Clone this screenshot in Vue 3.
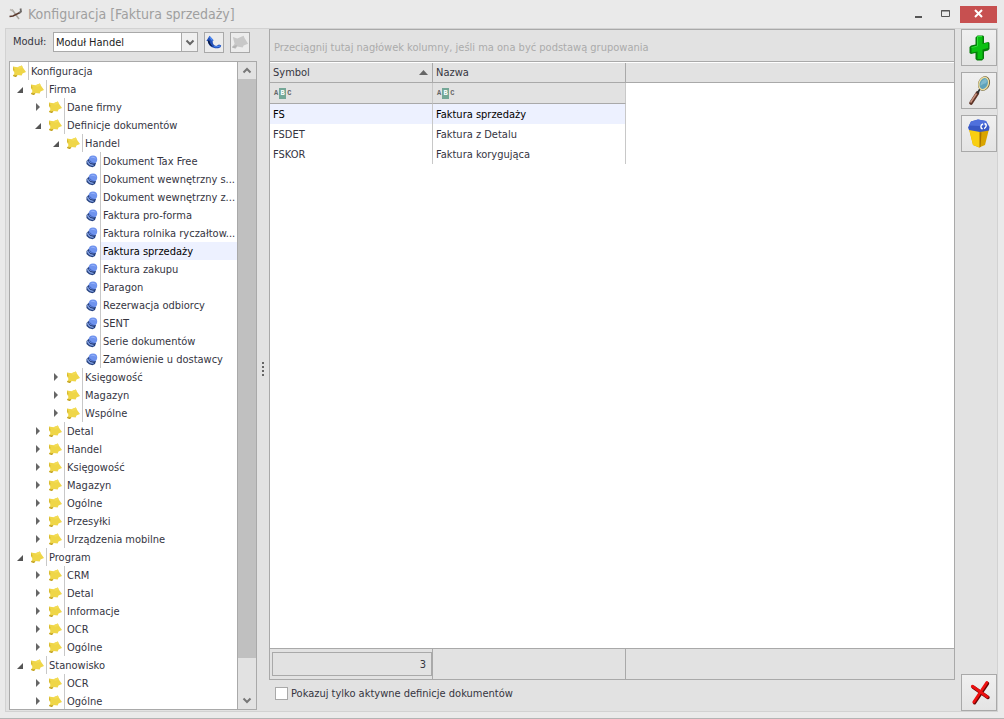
<script setup>
import { ref } from 'vue'

const moduleName = ref('Moduł Handel')
const activeOnly = ref(false)
const selected = ref('Faktura sprzedaży')

// level, label, state: open | closed | leaf | root
const nodes = [
  [0, 'Konfiguracja', 'root'],
  [1, 'Firma', 'open'],
  [2, 'Dane firmy', 'closed'],
  [2, 'Definicje dokumentów', 'open'],
  [3, 'Handel', 'open'],
  [4, 'Dokument Tax Free', 'leaf'],
  [4, 'Dokument wewnętrzny s...', 'leaf'],
  [4, 'Dokument wewnętrzny z...', 'leaf'],
  [4, 'Faktura pro-forma', 'leaf'],
  [4, 'Faktura rolnika ryczałtow...', 'leaf'],
  [4, 'Faktura sprzedaży', 'leaf'],
  [4, 'Faktura zakupu', 'leaf'],
  [4, 'Paragon', 'leaf'],
  [4, 'Rezerwacja odbiorcy', 'leaf'],
  [4, 'SENT', 'leaf'],
  [4, 'Serie dokumentów', 'leaf'],
  [4, 'Zamówienie u dostawcy', 'leaf'],
  [3, 'Księgowość', 'closed'],
  [3, 'Magazyn', 'closed'],
  [3, 'Wspólne', 'closed'],
  [2, 'Detal', 'closed'],
  [2, 'Handel', 'closed'],
  [2, 'Księgowość', 'closed'],
  [2, 'Magazyn', 'closed'],
  [2, 'Ogólne', 'closed'],
  [2, 'Przesyłki', 'closed'],
  [2, 'Urządzenia mobilne', 'closed'],
  [1, 'Program', 'open'],
  [2, 'CRM', 'closed'],
  [2, 'Detal', 'closed'],
  [2, 'Informacje', 'closed'],
  [2, 'OCR', 'closed'],
  [2, 'Ogólne', 'closed'],
  [1, 'Stanowisko', 'open'],
  [2, 'OCR', 'closed'],
  [2, 'Ogólne', 'closed']
].map(([level, label, state]) => ({ level, label, state }))

const rows = [
  { symbol: 'FS', name: 'Faktura sprzedaży' },
  { symbol: 'FSDET', name: 'Faktura z Detalu' },
  { symbol: 'FSKOR', name: 'Faktura korygująca' }
]
const current = ref('FS')
</script>

<template>
  <div class="window">
    <header class="titlebar">
      <svg class="app-icon" viewBox="0 0 14 14" aria-hidden="true">
        <path d="M3 2.500 L10 12" stroke="#aaa69f" stroke-width="1.500" />
        <path d="M0.500 9.500 L4 9 L11 5.500" stroke="#5b3a2e" stroke-width="1.600" fill="none" />
        <path d="M11.500 1.500 L12 4.500 L10 6" stroke="#6d6a68" stroke-width="1.800" fill="none" />
        <path d="M1 2.500 L4 4" stroke="#b9b5ae" stroke-width="1.600" />
      </svg>
      <h1>Konfiguracja [Faktura sprzedaży]</h1>
      <div class="caption">
        <button class="cap" type="button" aria-label="Minimalizuj">
          <svg viewBox="1 0 12 10"><path d="M2 7h7v2h-7z" fill="#555" /></svg>
        </button>
        <button class="cap" type="button" aria-label="Maksymalizuj">
          <svg viewBox="1 0 12 10"><path d="M1.500 1.500h8v6h-8z M1 2h9" fill="none" stroke="#555" /></svg>
        </button>
        <button class="cap close" type="button" aria-label="Zamknij">
          <svg viewBox="0 0 12 10"><path d="M2 1l7 7M9 1l-7 7" fill="none" stroke="#fff" stroke-width="2" /></svg>
        </button>
      </div>
    </header>

    <main class="panel">
      <section class="left">
        <div class="module">
          <label for="module">Moduł:</label>
          <div class="combo">
            <select id="module" v-model="moduleName"><option>Moduł Handel</option></select>
            <span class="drop"><svg viewBox="0 0 10 7"><path d="M1.500 1.500L5 5l3.500-3.500" fill="none" stroke="#666" stroke-width="2" /></svg></span>
          </div>
          <button class="small" type="button" aria-label="W górę">
            <svg viewBox="0 0 20 20">
              <path d="M5 3L1.500 9l1.500-.2C3.500 13 6 15.500 9.500 16.300c3 1 6.500.6 8-.8l.5-2-2.500-.6-2.500 1.400c-3 .2-4.500-1.600-4.500-5L9.500 8z" fill="#2350b8" />
              <path d="M5 3l4.500 5-2 .6-2.500-3zM10 14.500c2.500 1 4.500-1.200 7.500-.6l-.3 1c-2.500 1-5 1-7 .6z" fill="#4e8af2" />
              <path d="M3 8l2 .5c.4 3 1.800 5 4 6.500-3.500-.4-5.600-3-6-7z" fill="#0a1840" />
            </svg>
          </button>
          <button class="small" type="button" aria-label="Folder" disabled>
            <svg viewBox="0 0 20 20">
              <path d="M2 4.500l5 1.500 7-3 1 2.500 4 6.500-5 2-1 2-6-1L5 17.500l-4-1.500 3-4z" fill="#c8c8c8" />
              <path d="M1.500 15l4-1.500 1.500.5-2.500 3-3-1z" fill="#b4b4b4" />
            </svg>
          </button>
        </div>

        <div class="tree">
          <ul role="tree" aria-label="Konfiguracja">
            <li
              v-for="(n, i) in nodes"
              :key="i"
              role="treeitem"
              :aria-level="n.level + 1"
              :aria-selected="n.state === 'leaf' && n.label === selected"
              :class="['node', 'level-' + n.level]"
            >
              <button v-if="n.state === 'open'" class="toggle" type="button" aria-label="Zwiń">
                <svg viewBox="1 -1 8 8"><path d="M7 1v6H1z" fill="#555" /></svg>
              </button>
              <button v-else-if="n.state === 'closed'" class="toggle" type="button" aria-label="Rozwiń">
                <svg viewBox="1 -1 8 8"><path d="M2 -1l4 4-4 4z" fill="#666" /></svg>
              </button>
              <span v-else-if="n.state === 'leaf'" class="toggle"></span>
              <svg v-if="n.state !== 'leaf'" class="icon" viewBox="0 0 14 14" aria-hidden="true">
                <path d="M1 2.500l4.500.8L9.800 1.500l1 2L14 8l-3.500 1.500-.8 2-4.200-.6L4 13l-3-1 1.500-3L1 6z" fill="#efd648" />
                <path d="M1.200 11.200l2.800.3 1.500-.6L4 13l-3-1z" fill="#b8961d" />
                <path d="M1 2.500l1.500 3-.3 1.500L1 6z" fill="#d6b834" />
                <path d="M5.500 3.300l4.300-1.800 1 2-4 1.500z" fill="#f3dc55" />
              </svg>
              <svg v-else class="icon" viewBox="0 0 14 14" aria-hidden="true">
                <path d="M2.500 7L5 4.500l7 4.500-1 3-2.500 1.200L5 12.300 2.500 10z" fill="#24407e" />
                <path d="M3 6.800c0 2.700 2.700 5.200 6.300 5.100l.7-1.500C7.500 10.700 5 9 4.600 6.300z" fill="#7f9de0" />
                <path d="M4.600 6c.6 2.400 2.900 4 5.800 3.800" fill="none" stroke="#1c2f62" stroke-width="1.200" />
                <ellipse cx="9" cy="5.500" rx="4.200" ry="3.900" fill="#6f93ee" />
                <path d="M4.900 4.800c0 3 2.600 4.900 5.800 4.300C8 8.500 6 7 4.900 4.800z" fill="#4265bf" />
                <path d="M6.500 3.500c1.500-1.500 4.500-1 5.500 1.200-1.500-.6-3.500-.6-5.500-1.200z" fill="#94b1fb" />
              </svg>
              <span
                class="label"
                :class="{ current: n.state === 'leaf' && n.label === selected }"
                @click="n.state === 'leaf' && (selected = n.label)"
              >{{ n.label }}</span>
            </li>
          </ul>
          <div class="scroll">
            <button type="button" aria-label="Przewiń w górę">
              <svg viewBox="0 0 10 7"><path d="M1.500 5.500L5 2l3.500 3.500" fill="none" stroke="#777" stroke-width="2" /></svg>
            </button>
            <div class="track"><div class="thumb"></div></div>
            <button type="button" aria-label="Przewiń w dół">
              <svg viewBox="0 0 10 7"><path d="M1.500 1.500L5 5l3.500-3.500" fill="none" stroke="#777" stroke-width="2" /></svg>
            </button>
          </div>
        </div>
      </section>

      <div class="splitter" role="separator"><i></i><i></i><i></i><i></i></div>

      <section class="center">
        <div class="grid">
          <div class="group">Przeciągnij tutaj nagłówek kolumny, jeśli ma ona być podstawą grupowania</div>
          <div class="body">
            <table>
              <colgroup><col class="c1" /><col class="c2" /><col /></colgroup>
              <thead>
                <tr class="head">
                  <th scope="col" aria-sort="ascending">
                    <span class="th">Symbol<svg viewBox="0 0 9 5"><path d="M4.500 0L9 5H0z" fill="#666" /></svg></span>
                  </th>
                  <th scope="col">Nazwa</th>
                  <td></td>
                </tr>
                <tr class="filter">
                  <td><span class="abc"><span>A</span><b>B</b><span>C</span></span></td>
                  <td><span class="abc"><span>A</span><b>B</b><span>C</span></span></td>
                  <td></td>
                </tr>
              </thead>
              <tbody>
                <tr v-for="r in rows" :key="r.symbol" :class="{ current: r.symbol === current }" @click="current = r.symbol">
                  <td>{{ r.symbol }}</td>
                  <td>{{ r.name }}</td>
                  <td></td>
                </tr>
              </tbody>
            </table>
          </div>
          <div class="summary">
            <div><output>{{ rows.length }}</output></div>
            <div></div>
            <div></div>
          </div>
        </div>
        <label class="check"><input v-model="activeOnly" type="checkbox" />Pokazuj tylko aktywne definicje dokumentów</label>
      </section>

      <aside class="tools">
        <button class="tool" type="button" aria-label="Dodaj">
          <svg viewBox="0 0 32 32">
            <path d="M12.500 5.500l2-2 5.500 0 1 1v6.500l4.500-1 1 1v6l-1.500 1.500-4 1v7L19 28.500h-5l-1.500-1.500v-6l-4.500 1-1.500-1v-6l1.500-1.500 4.500-1z" fill="#067d0b" />
            <path d="M14.500 4.500h5v7.500l5.500-1.500v5.500l-5.500 1.500V27h-5v-7.500L8.500 20.800v-5.300l6-1.500z" fill="#0bc112" />
            <path d="M19 4.500h-4.500v9.500l-6 1.500" stroke="#2fe037" fill="none" />
          </svg>
        </button>
        <button class="tool" type="button" aria-label="Edytuj">
          <svg viewBox="0 0 32 32">
            <path d="M14.500 18L8 28" stroke="#5c3225" stroke-width="3.600" stroke-linecap="round" />
            <path d="M13.500 18.500L7.500 27.500" stroke="#c99380" stroke-width="1.500" />
            <path d="M17 14l-2.500 4" stroke="#2f3436" stroke-width="1.800" />
            <ellipse cx="21" cy="8.500" rx="4.600" ry="6.300" transform="rotate(22 21 8.500)" fill="#5b9db6" stroke="#695d32" stroke-width="2.400" />
            <ellipse cx="20.700" cy="8.500" rx="4.600" ry="6.300" transform="rotate(22 20.700 8.500)" fill="#5fa2ba" stroke="#eedd9f" stroke-width="1.300" />
            <path d="M17.500 11c0-4 2-6.500 5.500-7 1.500 1.500 1 3.500-.5 4.500-2 0-3.500 1-5 2.500z" fill="#80bacd" />
          </svg>
        </button>
        <button class="tool" type="button" aria-label="Usuń">
          <svg viewBox="0 0 32 32">
            <path d="M6 11h20l-4 16-6 2.500L10 27z" fill="#d9a400" />
            <path d="M6 11l11 2.500V29.500L10 27z" fill="#f8cf12" />
            <path d="M16.500 14v15.500l1-.5 1-14.500z" fill="#a67100" />
            <path d="M5 9.500L8 3.500 15 1.500l8 1.500 3.500 6-.5 3.500L17 14l-11-2z" fill="#3858c4" />
            <path d="M8 3.500L15 1.500l8 1.500 2 4.500L16.500 8 6 7.500z" fill="#4f70dc" />
            <path d="M20 6c-3 1-2.500 4.500-.5 5M21.500 5.500c3 1 1.500 4.500-.5 5M18 9.500l1.500 1.500M21.500 5.500l1.500 1" stroke="#fff" stroke-width="1.400" fill="none" />
          </svg>
        </button>
        <button class="tool last" type="button" aria-label="Zamknij">
          <svg viewBox="0 0 32 32">
            <path d="M10 10L25 20.500M24.500 6.500L11.500 25.800" stroke="#6a0505" stroke-width="3.400" stroke-linecap="round" fill="none" />
            <path d="M9.300 9.200L24.300 19.800M23.800 5.500L10.800 25" stroke="#ed1010" stroke-width="2.800" stroke-linecap="round" fill="none" />
          </svg>
        </button>
      </aside>
    </main>
  </div>
</template>

<style>
body { margin: 0; }
</style>

<style scoped>
* { box-sizing: border-box; }
.window {
  display: flex;
  flex-direction: column;
  height: 100vh;
  min-width: 640px;
  padding: 0 6px 6px 5px;
  border-bottom: 1px solid #b4b4b4;
  background: #eaeaea;
  color: #35353f;
  font: 11px/18px "DejaVu Sans Condensed", "Noto Sans", sans-serif;
}
button { padding: 0; font: inherit; color: inherit; }
svg { display: block; }
.titlebar { display: flex; align-items: center; height: 28px; flex: none; }
.app-icon { width: 14px; height: 14px; margin: 0 5px 0 4px; fill: none; }
h1 { flex: 1; margin: 0; font-size: 14px; font-weight: 400; color: #9f9f9f; }
.caption { display: flex; height: 17px; margin-right: 1px; }
.cap { display: grid; place-items: center; width: 27px; height: 17px; border: 0; background: transparent; }
.cap svg { width: 12px; height: 10px; }
.cap.close { width: 37px; background: #c75050; }
.panel {
  flex: 1;
  min-height: 0;
  display: flex;
  border: 1px solid #d2d2d2;
  background: #e2e2e2;
}
.left { width: 251px; flex: none; display: flex; flex-direction: column; padding: 3px 0 1px 3px; }
.module { display: flex; align-items: center; height: 20px; margin-bottom: 9px; padding-left: 4px; }
.module label { width: 40px; line-height: 20px; }
.combo { position: relative; width: 145px; height: 20px; margin-right: 6px; border: 1px solid #a9a9a9; background: #fff; }
.combo select { appearance: none; display: block; width: 100%; height: 18px; padding: 1px 18px 0 2px; border: 0; background: transparent; color: #222; font: inherit; }
.drop { position: absolute; top: 0; right: 0; display: grid; place-items: center; width: 16px; height: 18px; border-left: 1px solid #a9a9a9; background: #f0f0f0; pointer-events: none; }
.drop svg, .scroll svg { width: 10px; height: 7px; }
.small { width: 20px; height: 21px; flex: none; border: 1px solid #a9a9a9; background: #ececec; }
.small + .small { margin-left: 6px; }
.small svg { width: 18px; height: 18px; }
.tree { flex: 1; min-height: 0; display: flex; border: 1px solid #a9a9a9; background: #fff; }
ul { flex: 1; min-width: 0; margin: 0; padding: 0; list-style: none; overflow: hidden; }
.node { display: flex; align-items: center; height: 18px; padding-left: 2px; }
.level-2 { padding-left: 20px; }
.level-3 { padding-left: 38px; }
.level-4 { padding-left: 56px; }
.toggle { display: grid; place-items: center; width: 18px; height: 18px; flex: none; border: 0; background: none; }
.toggle svg { width: 8px; height: 8px; }
.icon { width: 14px; height: 14px; flex: none; }
.label { flex: 1; min-width: 0; height: 18px; margin-left: 2px; padding-left: 2px; border-left: 1px solid #c8c8c8; line-height: 20px; white-space: nowrap; }
.current { background: #edf1ff; color: #000; }
.scroll { display: flex; flex-direction: column; width: 19px; flex: none; border-left: 1px solid #a9a9a9; background: #e2e2e2; }
.scroll button { display: grid; place-items: center; height: 17px; flex: none; border: 0; background: transparent; }
.track { flex: 1; padding-bottom: 34px; }
.thumb { height: 100%; background: #c0c0c0; }
.splitter { display: flex; flex-direction: column; align-items: center; justify-content: center; gap: 2px; width: 12px; flex: none; padding-bottom: 2px; }
.splitter i { width: 2px; height: 2px; background: #666; }
.center { flex: 1; min-width: 0; display: flex; flex-direction: column; }
.grid { flex: 1; min-height: 0; display: flex; flex-direction: column; border: 1px solid #a9a9a9; background: #fff; }
.group { height: 32px; flex: none; margin-bottom: 1px; padding: 0 4px; border-bottom: 1px solid #a9a9a9; background: #e2e2e2; color: #ababab; line-height: 36px; white-space: nowrap; overflow: hidden; }
.body { flex: 1; min-height: 0; overflow: hidden; }
table { width: 100%; table-layout: fixed; border-spacing: 0; }
.c1 { width: 163px; }
.c2 { width: 193px; }
th, td { height: 20px; padding: 0 3px; border-right: 1px solid #c8c8c8; text-align: left; font-weight: 400; }
tr > :last-child { border-right: 0; }
.head > * { border-right-color: #a9a9a9; border-bottom: 1px solid #a9a9a9; background: #e2e2e2; }
.th { display: flex; align-items: center; justify-content: space-between; }
.th svg { width: 9px; height: 5px; margin-right: 1px; }
.filter td { height: 21px; border-bottom: 1px solid #a9a9a9; background: #e2e2e2; }
.filter td:last-child { border-bottom: 0; background: #fff; }
tbody td { padding-top: 2px; }
tbody .current { background: none; }
tbody .current td:not(:last-child) { background: #edf1ff; }
.abc { display: flex; align-items: center; gap: 1px; margin-left: 1px; color: #666; font: bold 7px/10px "Liberation Mono", monospace; }
.abc b { width: 7px; height: 11px; background: #74a797; color: #fff; text-align: center; }
.summary { display: grid; grid-template-columns: 163px 193px 1fr; height: 31px; flex: none; border-top: 1px solid #a9a9a9; background: #e2e2e2; }
.summary div { padding: 3px 0 3px 2px; border-right: 1px solid #a9a9a9; }
.summary div:last-child { border-right: 0; }
output { display: block; height: 24px; padding-right: 5px; border: 1px solid #a9a9a9; text-align: right; line-height: 23px; }
.check { display: flex; align-items: center; align-self: flex-start; height: 27px; margin-bottom: 4px; padding-left: 6px; line-height: 20px; }
.check input { appearance: none; width: 13px; height: 13px; margin: 0 3px 0 0; border: 1px solid #a9a9a9; background: #fff; }
.tools { display: flex; flex-direction: column; gap: 6px; width: 42px; flex: none; padding-left: 6px; }
.tool { display: grid; place-items: center; width: 36px; height: 37px; flex: none; border: 1px solid #a9a9a9; background: linear-gradient(#f0f0f0, #e4e4e4); }
.tool svg { width: 32px; height: 32px; fill: none; }
.last { margin-top: auto; }
</style>
